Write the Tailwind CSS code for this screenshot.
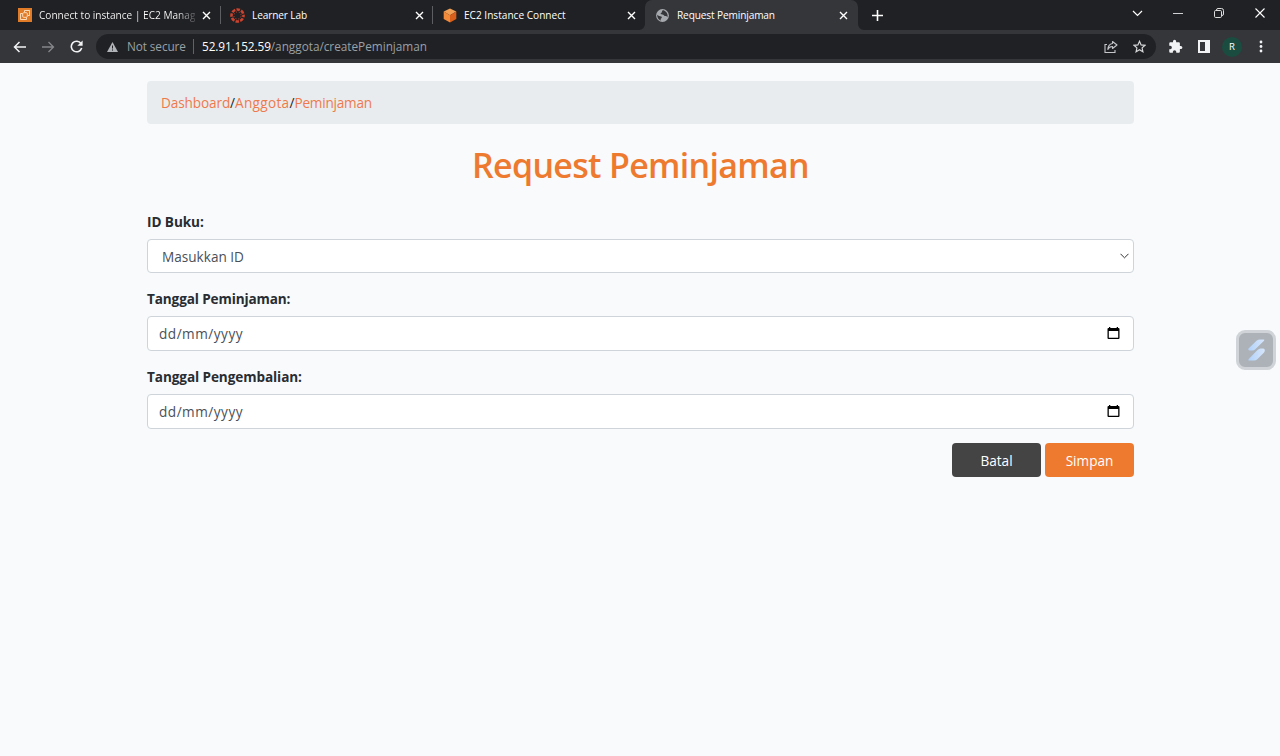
<!DOCTYPE html>
<html lang="id">
<head>
<meta charset="utf-8">
<title>Request Peminjaman</title>
<script src="https://cdn.jsdelivr.net/npm/@tailwindcss/browser@4"></script>
</head>
<body class="h-[756px] w-[1280px] overflow-hidden bg-[#f8fafc] font-['Open_Sans','Noto_Sans',sans-serif] text-[#212529]">
<header class="h-[63px] bg-[#35363a] text-white">
  <div class="flex h-[30px] bg-[#202124] text-[10.1px] leading-[30px]">
    <div class="flex w-[220px] items-center pl-[18px]">
      <svg class="size-[14px] shrink-0" viewBox="0 0 14 14" fill="none"><rect width="14" height="14" fill="#e07b28"/><g stroke="#ffe5c8" stroke-width=".9"><path d="M4.500 5.500H2.500v6h6V9.500"/><rect x="4.700" y="4.700" width="4.600" height="4.600" rx="1"/><path d="M6.500 4V2.500h5v5H10"/></g></svg>
      <span class="ml-[7px] w-[156px] whitespace-nowrap"><span class="bg-linear-to-r from-white from-88% to-[#505154] bg-clip-text text-transparent">Connect to instance | EC2 Manag</span></span>
      <svg class="ml-[7px] size-[9px] shrink-0" viewBox="0 0 9 9" stroke="#fff" stroke-width="1.400"><path d="M1 1l7 7M8 1L1 8"/></svg>
    </div>
    <div class="flex w-[213px] items-center">
      <i class="h-[18px] w-px bg-[#5c5e62]"></i>
      <svg class="ml-[9px] size-[15px] shrink-0" viewBox="0 0 15 15"><circle cx="7.500" cy="7.500" r="6" fill="none" stroke="#c9432f" stroke-width="2.600" stroke-dasharray="3.500 1.212" stroke-dashoffset="1.750"/><circle cx="7.500" cy="7.500" r="3.600" fill="none" stroke="#c9432f" stroke-width="1" stroke-dasharray="1 1.827" stroke-dashoffset="-.9"/></svg>
      <span class="ml-[7px] w-[155px] tracking-[-0.12px]">Learner Lab</span>
      <svg class="ml-[8px] size-[9px] shrink-0" viewBox="0 0 9 9" stroke="#fff" stroke-width="1.400"><path d="M1 1l7 7M8 1L1 8"/></svg>
    </div>
    <div class="flex w-[212px] items-center">
      <i class="-ml-px h-[18px] w-px bg-[#5c5e62]"></i>
      <svg class="ml-[10px] h-[15px] w-[14px] shrink-0" viewBox="0 0 14 15"><path d="M7 .5l6.300 3L7 7.200.7 3.500z" fill="#f3a057"/><path d="M.7 3.500L7 7.200v7.300l-6.300-3.400z" fill="#f18a3a"/><path d="M13.300 3.500L7 7.200v7.300l6.300-3.400z" fill="#d9601c"/></svg>
      <span class="ml-[7px] w-[155px]">EC2 Instance Connect</span>
      <svg class="ml-[8px] size-[9px] shrink-0" viewBox="0 0 9 9" stroke="#fff" stroke-width="1.400"><path d="M1 1l7 7M8 1L1 8"/></svg>
    </div>
    <div class="relative flex w-[213px] items-center rounded-t-[7px] bg-[#35363a] pl-[11px]">
      <svg class="absolute bottom-0 -left-[6px] size-[6px]" viewBox="0 0 6 6"><path d="M6 0v6H0a6 6 0 006-6z" fill="#35363a"/></svg>
      <svg class="absolute -right-[6px] bottom-0 size-[6px]" viewBox="0 0 6 6"><path d="M0 0v6h6a6 6 0 01-6-6z" fill="#35363a"/></svg>
      <svg class="size-[13px] shrink-0" viewBox="0 0 13 13"><circle cx="6.500" cy="6.500" r="6.400" fill="#a6a9ad"/><path d="M7.800 1.300c-1.800-.2-2.200 1-1.600 1.600-.5 1-1.700.6-1.500 2 .9.800 2.700.1 3.200 1.300.3 1.100 1.400.8 2.100.9 1 .2.800 1 1.400 1.100.5-1.800.5-4.500-3.600-6.900zM1.300 5.800c1 1.500 2.600 1.100 4 1.700 1 .6.500 1.700-.4 2-.5.600-.1 1.500.1 2C2.800 11 .9 8.500 1.300 5.800z" fill="#35363a"/></svg>
      <span class="ml-[8px] w-[154px] tracking-[-0.12px]">Request Peminjaman</span>
      <svg class="ml-[8px] size-[9px] shrink-0" viewBox="0 0 9 9" stroke="#fff" stroke-width="1.400"><path d="M1 1l7 7M8 1L1 8"/></svg>
    </div>
    <div class="flex flex-1 items-center pl-[14px]">
      <svg class="size-[11px]" viewBox="0 0 11 11" stroke="#fff" stroke-width="1.600"><path d="M5.500 0v11M0 5.500h11"/></svg>
      <svg class="mb-[4px] ml-auto h-[8px] w-[11px]" viewBox="0 0 11 8" fill="none" stroke="#fff" stroke-width="1.200"><path d="M1 2l4.500 4.500L10 2"/></svg>
      <i class="mb-[3px] ml-[30px] h-px w-[10px] bg-[#d0d1d2]"></i>
      <svg class="mb-[4px] ml-[31px] size-[10px]" viewBox="0 0 10 10" fill="none" stroke="#ddd"><rect x=".5" y="2.500" width="7" height="7" rx="1.200"/><path d="M2.500 2.500V2Q2.500.5 4 .5h3.500q2 0 2 2V6q0 1.500-1.500 1.500h-.5"/></svg>
      <svg class="mr-[15px] mb-[4px] ml-[31px] size-[10px]" viewBox="0 0 10 10" stroke="#fff" stroke-width="1.100"><path d="M.5.500l9 9M9.500.500l-9 9"/></svg>
    </div>
  </div>
  <div class="flex h-[33px] items-center">
    <svg class="ml-[13px] h-[12px] w-[14px]" viewBox="0 0 14 12" fill="none" stroke="#f1f3f4" stroke-width="1.500"><path d="M13 6H1.800M6.500 1l-5 5 5 5"/></svg>
    <svg class="ml-[14px] h-[12px] w-[14px]" viewBox="0 0 14 12" fill="none" stroke="#85878a" stroke-width="1.300"><path d="M1 6h11.200M7.500 1l5 5-5 5"/></svg>
    <svg class="ml-[15px] size-[13px]" viewBox="0 0 13 13"><path d="M11 3.500A5.300 5.300 0 1011.700 8" fill="none" stroke="#f1f3f4" stroke-width="1.600"/><path d="M12.600.4v5.300H7.300z" fill="#f1f3f4"/></svg>
    <div class="ml-[13px] flex h-[25px] w-[1060px] items-center rounded-full bg-[#202124] text-[11.800px]">
      <svg class="ml-[11px] h-[10px] w-[11px]" viewBox="0 0 11 10"><path d="M5.500 0L11 10H0z" fill="#b0b3b7"/><path d="M5.500 3.500v3M5.500 7.400v1.200" stroke="#202124" stroke-width="1"/></svg>
      <span class="ml-[9px] w-[60px] whitespace-nowrap tracking-[-0.1px] text-[#9aa0a6]">Not secure</span>
      <i class="ml-[6px] h-[15px] w-px bg-[#606266]"></i>
      <span class="ml-[8px] whitespace-nowrap text-[#9aa0a6]"><span class="tracking-[-0.1px] text-white">52.91.152.59</span><span class="tracking-[-0.02px]">/anggota/createPeminjaman</span></span>
      <svg class="ml-auto size-[14px]" viewBox="0 0 14 14" fill="none" stroke="#c4c6c9" stroke-width="1.100"><path d="M3 4.500H1v8h10V10"/><path d="M8.500 1.500L13 5 8.500 8.500v-2C6 6.500 4.600 7.500 3.800 9.500 4 6.300 5.500 4 8.500 3.500z" stroke-linejoin="round"/></svg>
      <svg class="mr-[10px] ml-[15px] size-[13px]" viewBox="0 0 13 13" fill="none" stroke="#d5d7d9" stroke-width="1.200"><path d="M6.500 1.300l1.600 3.600 3.900.4-2.900 2.600.8 3.900-3.400-2-3.400 2 .8-3.900L1 5.300l3.900-.4z"/></svg>
    </div>
    <svg class="ml-[12px] size-[15px]" viewBox="0 0 24 24" fill="#f1f3f4"><path d="M20.500 11H19V7c0-1.100-.9-2-2-2h-4V3.500a2.500 2.500 0 00-5 0V5H4c-1.100 0-2 .9-2 2v3.800h1.500a2.700 2.700 0 010 5.400H2V20c0 1.100.9 2 2 2h3.800v-1.500a2.700 2.700 0 015.400 0V22H17c1.100 0 2-.9 2-2v-4h1.500a2.500 2.500 0 000-5z"/></svg>
    <svg class="ml-[15px] h-[13px] w-[12px]" viewBox="0 0 12 13"><path d="M0 0h12v13H0zM2 2v9h5V2z" fill="#f1f3f4" fill-rule="evenodd"/></svg>
    <span class="ml-[12px] flex size-[20px] items-center justify-center rounded-full bg-[#1a4d40] pt-px text-[9.500px] text-white">R</span>
    <svg class="ml-[17px] h-[13px] w-[4px]" viewBox="0 0 4 13" fill="#f1f3f4"><circle cx="2" cy="2" r="1.400"/><circle cx="2" cy="6.500" r="1.400"/><circle cx="2" cy="11" r="1.400"/></svg>
  </div>
</header>
<main class="ml-[147px] w-[987px] pt-[18px] text-[13.6px]">
  <nav class="flex h-[43px] items-center rounded-[4px] bg-[#e9ecef] pt-[2px] pl-[14px] text-[#ee7a4c]"><a class="tracking-[-0.12px]">Dashboard</a><span class="text-[#212529]">/</span><a class="tracking-[0.300px]">Anggota</a><span class="text-[#212529]">/</span><a class="tracking-[-0.220px]">Peminjaman</a></nav>
  <h1 class="mt-[19px] h-[43px] text-center text-[34px] leading-[44px] font-semibold tracking-[-0.7px] text-[#ee7a2f]"><span>Request Peminjaman</span></h1>
  <form>
    <label class="mt-[25px] block h-[21px] leading-[21px] font-bold tracking-[-0.08px] text-[#292d31]"><span>ID Buku:</span></label>
    <div class="mt-[7px] flex h-[34px] items-center rounded-[4px] border border-[#ced4da] bg-white pr-[4px] pl-[14px] text-[#495057]"><span class="pt-[3px]">Masukkan ID</span><svg class="ml-auto h-[6px] w-[9px]" viewBox="0 0 9 6" fill="none" stroke="#333" stroke-width="1"><path d="M.5.800l4 4 4-4"/></svg></div>
    <label class="mt-[15px] block h-[21px] leading-[21px] font-bold tracking-[-0.14px] text-[#292d31]"><span>Tanggal Peminjaman:</span></label>
    <div class="mt-[7px] flex h-[35px] items-center rounded-[4px] border border-[#ced4da] bg-white pr-[13px] pl-[11px] text-[#495057]"><span class="pt-px tracking-[0.5px]">dd/mm/yyyy</span><svg class="mb-px ml-auto h-[12px] w-[13px]" viewBox="0 0 13 12"><path d="M2 0h1.300v1h6.400V0H11v1h.5q1 0 1 1v9q0 1-1 1h-10q-1 0-1-1V2q0-1 1-1H2zM1.800 4v6.700h9.400V4z" fill="#000" fill-rule="evenodd"/></svg></div>
    <label class="mt-[15px] block h-[21px] leading-[21px] font-bold tracking-[-0.1px] text-[#292d31]"><span>Tanggal Pengembalian:</span></label>
    <div class="mt-[7px] flex h-[35px] items-center rounded-[4px] border border-[#ced4da] bg-white pr-[13px] pl-[11px] text-[#495057]"><span class="pt-px tracking-[0.5px]">dd/mm/yyyy</span><svg class="mb-px ml-auto h-[12px] w-[13px]" viewBox="0 0 13 12"><path d="M2 0h1.300v1h6.400V0H11v1h.5q1 0 1 1v9q0 1-1 1h-10q-1 0-1-1V2q0-1 1-1H2zM1.800 4v6.700h9.400V4z" fill="#000" fill-rule="evenodd"/></svg></div>
    <div class="mt-[14px] flex justify-end gap-1 text-white">
      <button type="button" class="flex h-[34px] w-[89px] items-center justify-center rounded-[4px] bg-[#444] pt-[3px]"><span>Batal</span></button>
      <button type="button" class="flex h-[34px] w-[89px] items-center justify-center rounded-[4px] bg-[#ee7a2f] pt-[3px]"><span>Simpan</span></button>
    </div>
  </form>
</main>
<aside class="absolute top-[330px] left-[1236px] flex size-[40px] items-center justify-center rounded-[9px] border-[3px] border-[#d0d4d8] bg-[#adb2b8]">
  <svg class="h-[22px] w-[17px] shrink-0" viewBox="0 0 17 22"><defs><linearGradient id="g" x1="0" y1="0" x2="1" y2="0"><stop stop-color="#b1d2fa"/><stop offset="1" stop-color="#d7e6fa"/></linearGradient></defs><path d="M8.500 1.800Q10 .500 12 .500h3.500q1.500 0 .5 1.300L7.500 10Q6 11.500 4 11.500H1.500Q0 11.500.3 9.800z" fill="url(#g)"/><path d="M9.500 11q1.500-1.500 3-1.500h2.500q2 0 1.800 2-.1 1.500-1 2.300L9.500 20q-1.500 1.500-3.500 1.500H1.500q-2 0-.5-1.700z" fill="url(#g)"/></svg>
</aside>
</body>
</html>
